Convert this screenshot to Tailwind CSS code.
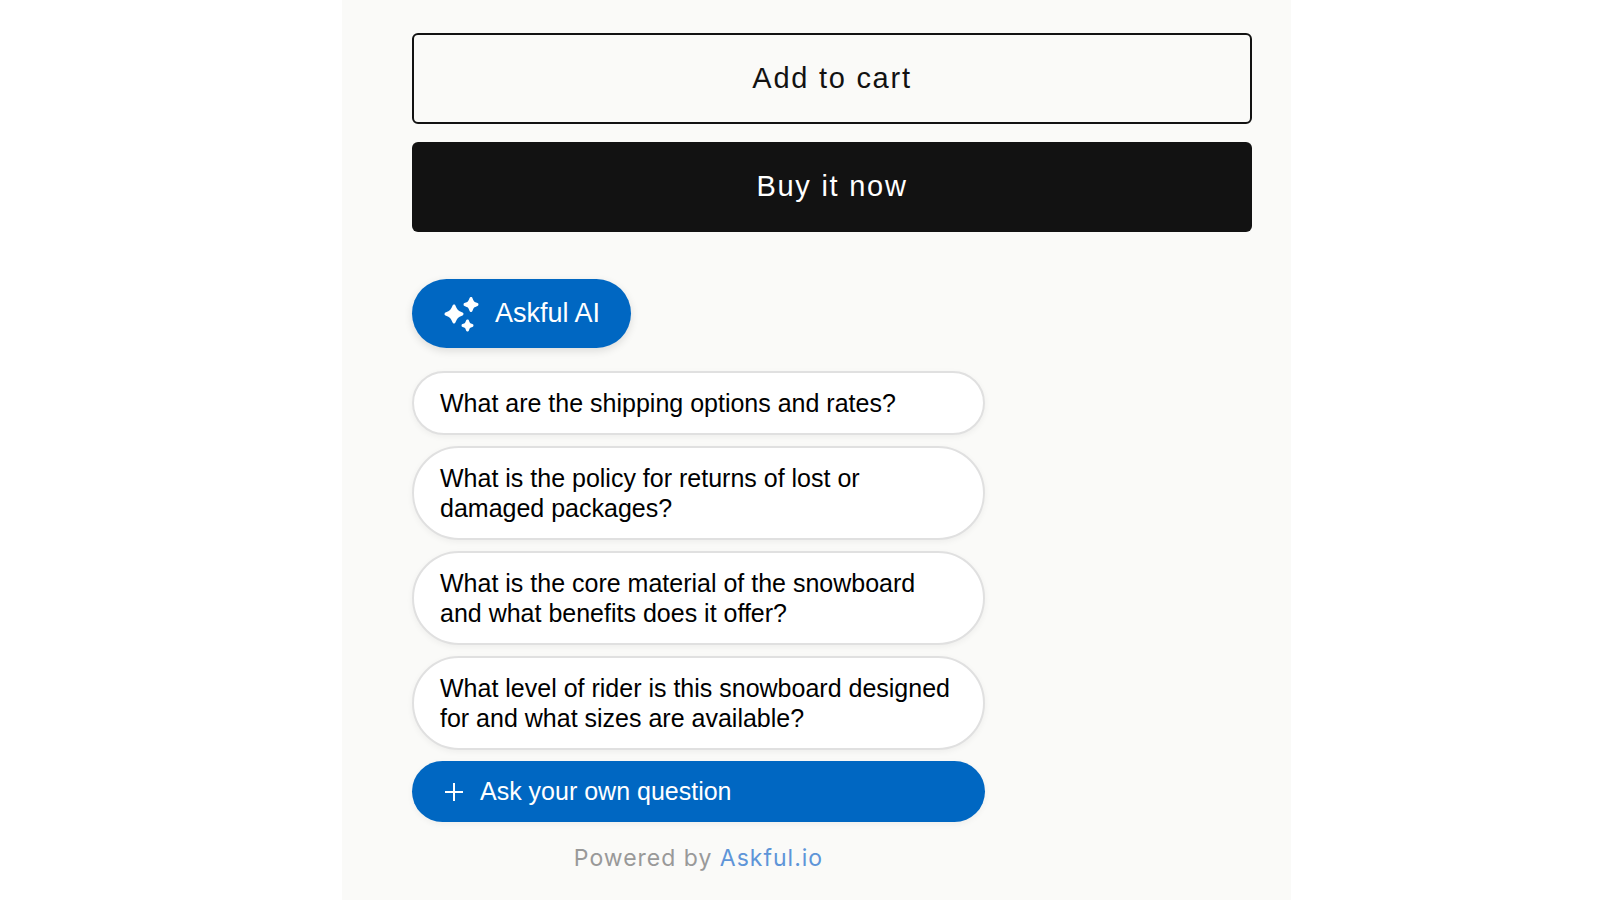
<!DOCTYPE html>
<html lang="en">
<head>
    <meta charset="UTF-8">
    <meta name="viewport" content="width=device-width, initial-scale=1.0">
    <title>Askful AI - Product questions</title>
    <script src="https://cdn.jsdelivr.net/npm/@tailwindcss/browser@4"></script>
</head>
<body class="bg-white pl-[33px] font-['Liberation_Sans',Arial,sans-serif]">
    <main class="mx-auto min-h-screen w-full max-w-[949px] bg-[#fafaf8] pt-[33px] pr-[39px] pb-6 pl-[70px]">
        <!-- Purchase buttons -->
        <div class="flex flex-col gap-[18px]">
            <button type="button" class="h-[91px] w-full rounded-md border-2 border-[#121212] text-[29px] tracking-[0.06em] text-[#121212]">Add to cart</button>
            <button type="button" class="h-[90px] w-full rounded-md bg-[#121212] text-[29px] tracking-[0.06em] text-white">Buy it now</button>
        </div>

        <!-- Askful widget -->
        <section class="mt-[47px] max-w-[573px]">
            <button type="button" class="flex h-[69px] items-center gap-[15px] rounded-full bg-[#0067c2] pr-[31px] pl-8 text-[27px] text-white shadow-[0_3px_8px_rgba(0,0,0,0.12)]">
                <svg class="h-9 w-9" viewBox="0 0 36 36" fill="currentColor" stroke="currentColor" stroke-width="3" stroke-linejoin="round" aria-hidden="true">
                    <path d="M10 10C12 15 13 16 18 18C13 20 12 21 10 26C8 21 7 20 2 18C7 16 8 15 10 10Z"/>
                    <path d="M27 2.500C28.500 6.500 29 7 33 8.500C29 10 28.500 10.500 27 14.500C25.500 10.500 25 10 21 8.500C25 7 25.500 6.500 27 2.500Z"/>
                    <path d="M23.500 25C24.500 28 25 28.500 28 29.500C25 30.500 24.500 31 23.500 34C22.500 31 22 30.500 19 29.500C22 28.500 22.500 28 23.500 25Z"/>
                </svg>
                Askful AI
            </button>

            <div class="mt-[23px] flex flex-col gap-[11px]">
                <button type="button" class="w-full rounded-[48px] border-2 border-[#e0e0e0] bg-white py-[15px] pr-6 pl-[26px] text-left text-[25px] leading-[30px] text-black shadow-[0_2px_6px_rgba(0,0,0,0.05)]">What are the shipping options and rates?</button>
                <button type="button" class="w-full rounded-[48px] border-2 border-[#e0e0e0] bg-white py-[15px] pr-6 pl-[26px] text-left text-[25px] leading-[30px] text-black shadow-[0_2px_6px_rgba(0,0,0,0.05)]">What is the policy for returns of lost or damaged packages?</button>
                <button type="button" class="w-full rounded-[48px] border-2 border-[#e0e0e0] bg-white py-[15px] pr-6 pl-[26px] text-left text-[25px] leading-[30px] text-black shadow-[0_2px_6px_rgba(0,0,0,0.05)]">What is the core material of the snowboard and what benefits does it offer?</button>
                <button type="button" class="w-full rounded-[48px] border-2 border-[#e0e0e0] bg-white py-[15px] pr-6 pl-[26px] text-left text-[25px] leading-[30px] text-black shadow-[0_2px_6px_rgba(0,0,0,0.05)]">What level of rider is this snowboard designed for and what sizes are available?</button>
                <button type="button" class="flex h-[61px] w-full items-center gap-4 rounded-full bg-[#0067c2] px-8 text-[25px] text-white shadow-[0_2px_6px_rgba(0,0,0,0.05)]">
                    <svg class="h-5 w-5" viewBox="0 0 20 20" fill="none" stroke="currentColor" stroke-width="2" aria-hidden="true">
                        <path d="M10 1v18M1 10h18"/>
                    </svg>
                    Ask your own question
                </button>
            </div>

            <p class="mt-5 text-center font-[Inter,sans-serif] text-[23px] leading-8 tracking-[1px] text-[#999]">Powered by <a href="#" class="text-[#5e95d8]">Askful.io</a></p>
        </section>
    </main>
</body>
</html>
